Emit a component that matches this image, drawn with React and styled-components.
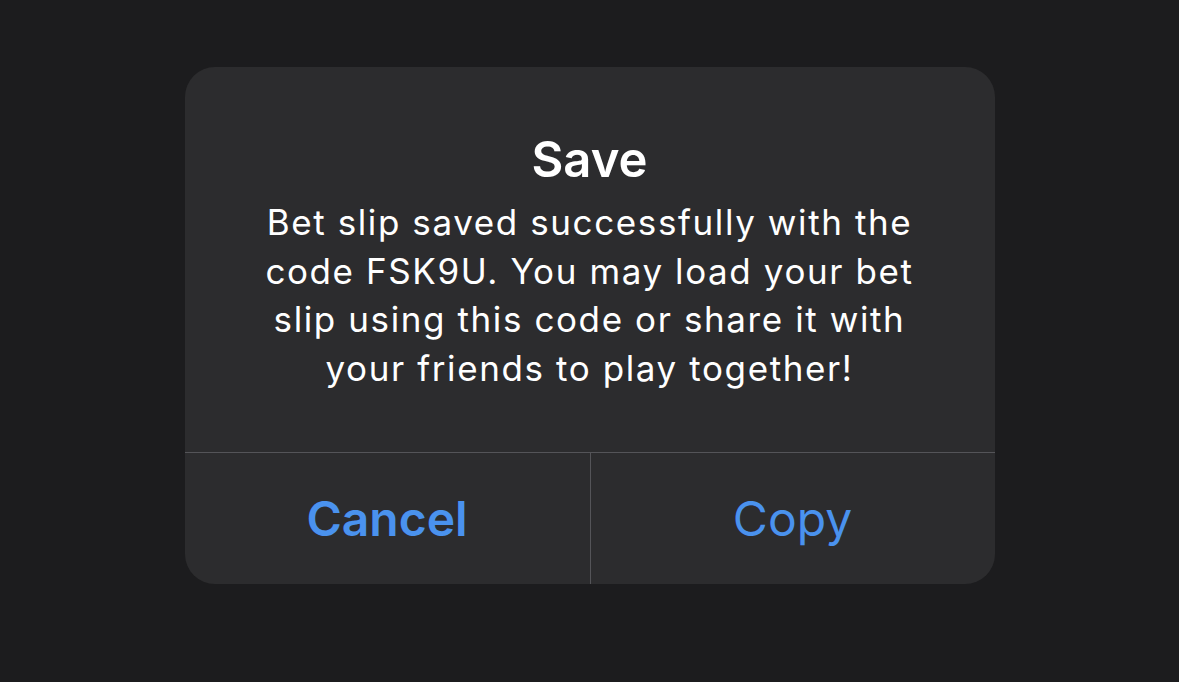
import React from "react";
import styled, { createGlobalStyle } from "styled-components";

const Global = createGlobalStyle`
  html, body {
    margin: 0;
    padding: 0;
    background: #1c1c1e;
  }
  body {
    font-family: "Inter", "Noto Sans", "Liberation Sans", sans-serif;
    -webkit-font-smoothing: antialiased;
  }
`;

const Page = styled.div`
  width: 1179px;
  height: 682px;
  box-sizing: border-box;
  padding-top: 67px;
  display: flex;
  flex-direction: column;
  align-items: center;
  background: #1c1c1e;
`;

const Alert = styled.div`
  width: 810px;
  background: #2c2c2e;
  border-radius: 30px;
  overflow: hidden;
  display: flex;
  flex-direction: column;
`;

const Content = styled.div`
  height: 385px;
  box-sizing: border-box;
  padding: 63px 40px 0;
  display: flex;
  flex-direction: column;
  align-items: center;
  text-align: center;
  color: #ffffff;
`;

const Title = styled.h2`
  margin: 0;
  font-size: 49px;
  line-height: 60px;
  font-weight: 600;
  letter-spacing: 0;
`;

const Message = styled.p`
  margin: 8px 0 0;
  font-size: 35px;
  line-height: 48.5px;
  font-weight: 400;
  letter-spacing: 1.6px;
  max-width: 665px;
`;

const Actions = styled.div`
  height: 131px;
  border-top: 1px solid #545458;
  display: grid;
  grid-template-columns: 1fr 1fr;
`;

const Action = styled.button`
  appearance: none;
  background: transparent;
  border: none;
  margin: 0;
  padding: 0;
  font-family: inherit;
  font-size: 48px;
  font-weight: ${(p) => (p.$bold ? 600 : 400)};
  color: #4a92ee;
  display: flex;
  align-items: center;
  justify-content: center;
  cursor: pointer;
  & + & {
    border-left: 1px solid #545458;
  }
`;

export default function App() {
  return (
    <>
      <Global />
      <Page>
        <Alert>
          <Content>
            <Title>Save</Title>
            <Message>
              Bet slip saved successfully with the code FSK9U. You may load your
              bet slip using this code or share it with your friends to play
              together!
            </Message>
          </Content>
          <Actions>
            <Action $bold>Cancel</Action>
            <Action>Copy</Action>
          </Actions>
        </Alert>
      </Page>
    </>
  );
}
